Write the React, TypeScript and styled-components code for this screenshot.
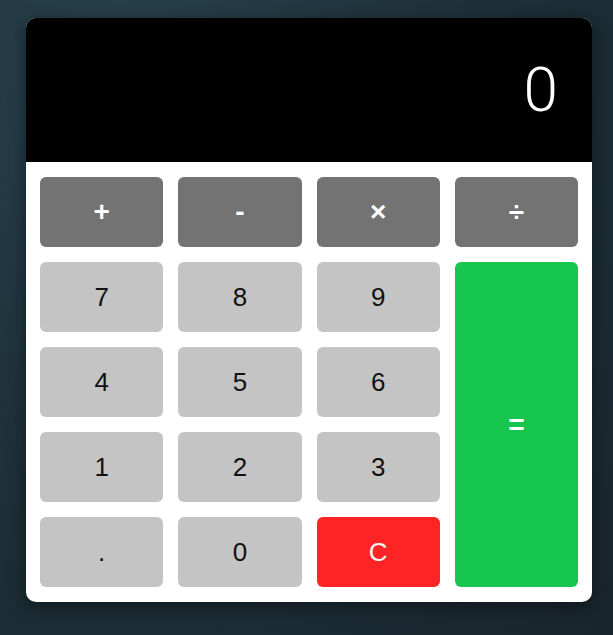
import React from "react";
import styled, { createGlobalStyle } from "styled-components";

const Global = createGlobalStyle`
  html, body { margin: 0; padding: 0; }
  body {
    width: 613px;
    height: 635px;
    overflow: hidden;
    background: radial-gradient(ellipse at 20% 10%, #27414c 0%, #1f323b 45%, #18252c 100%);
    font-family: "Liberation Sans", Arial, sans-serif;
  }
`;

const Page = styled.div`
  display: flex;
  padding: 18px 0 0 26px;
`;

const Card = styled.div`
  width: 566px;
  background: #ffffff;
  border-radius: 10px;
  overflow: hidden;
  box-shadow: 0 4px 18px rgba(0, 0, 0, 0.45);
`;

const Display = styled.div`
  height: 144px;
  background: #000000;
  color: #ffffff;
  display: flex;
  align-items: center;
  justify-content: flex-end;
  padding: 0 34px 0 20px;
  box-sizing: border-box;
  font-family: Roboto, "Liberation Sans", sans-serif;
  font-weight: 300;
  font-size: 62px;
  line-height: 1;
`;

const Keys = styled.div`
  display: grid;
  grid-template-columns: repeat(4, 1fr);
  grid-auto-rows: 70px;
  gap: 15px;
  padding: 15px 14px;
`;

type Kind = "op" | "num" | "clear" | "eq";

const colors: Record<Kind, { bg: string; fg: string }> = {
  op: { bg: "#737373", fg: "#ffffff" },
  num: { bg: "#c4c4c4", fg: "#111111" },
  clear: { bg: "#fe2426", fg: "#f4f4f4" },
  eq: { bg: "#16c64f", fg: "#ffffff" },
};

const Key = styled.button<{ $kind: Kind; $tall?: boolean }>`
  border: none;
  border-radius: 6px;
  background: ${(p) => colors[p.$kind].bg};
  color: ${(p) => colors[p.$kind].fg};
  font-family: "Liberation Sans", Arial, sans-serif;
  font-size: ${(p) => (p.$kind === "op" || p.$kind === "eq" ? "28px" : "26px")};
  font-weight: ${(p) => (p.$kind === "op" || p.$kind === "eq" ? 700 : 400)};
  display: flex;
  align-items: center;
  justify-content: center;
  padding: 0;
  grid-column: ${(p) => (p.$tall ? "4" : "auto")};
  grid-row: ${(p) => (p.$tall ? "2 / span 4" : "auto")};
`;

export default function App() {
  return (
    <>
      <Global />
      <Page>
        <Card>
          <Display>0</Display>
          <Keys>
            <Key $kind="op">+</Key>
            <Key $kind="op">-</Key>
            <Key $kind="op">×</Key>
            <Key $kind="op">÷</Key>
            <Key $kind="num">7</Key>
            <Key $kind="num">8</Key>
            <Key $kind="num">9</Key>
            <Key $kind="eq" $tall>=</Key>
            <Key $kind="num">4</Key>
            <Key $kind="num">5</Key>
            <Key $kind="num">6</Key>
            <Key $kind="num">1</Key>
            <Key $kind="num">2</Key>
            <Key $kind="num">3</Key>
            <Key $kind="num">.</Key>
            <Key $kind="num">0</Key>
            <Key $kind="clear">C</Key>
          </Keys>
        </Card>
      </Page>
    </>
  );
}
